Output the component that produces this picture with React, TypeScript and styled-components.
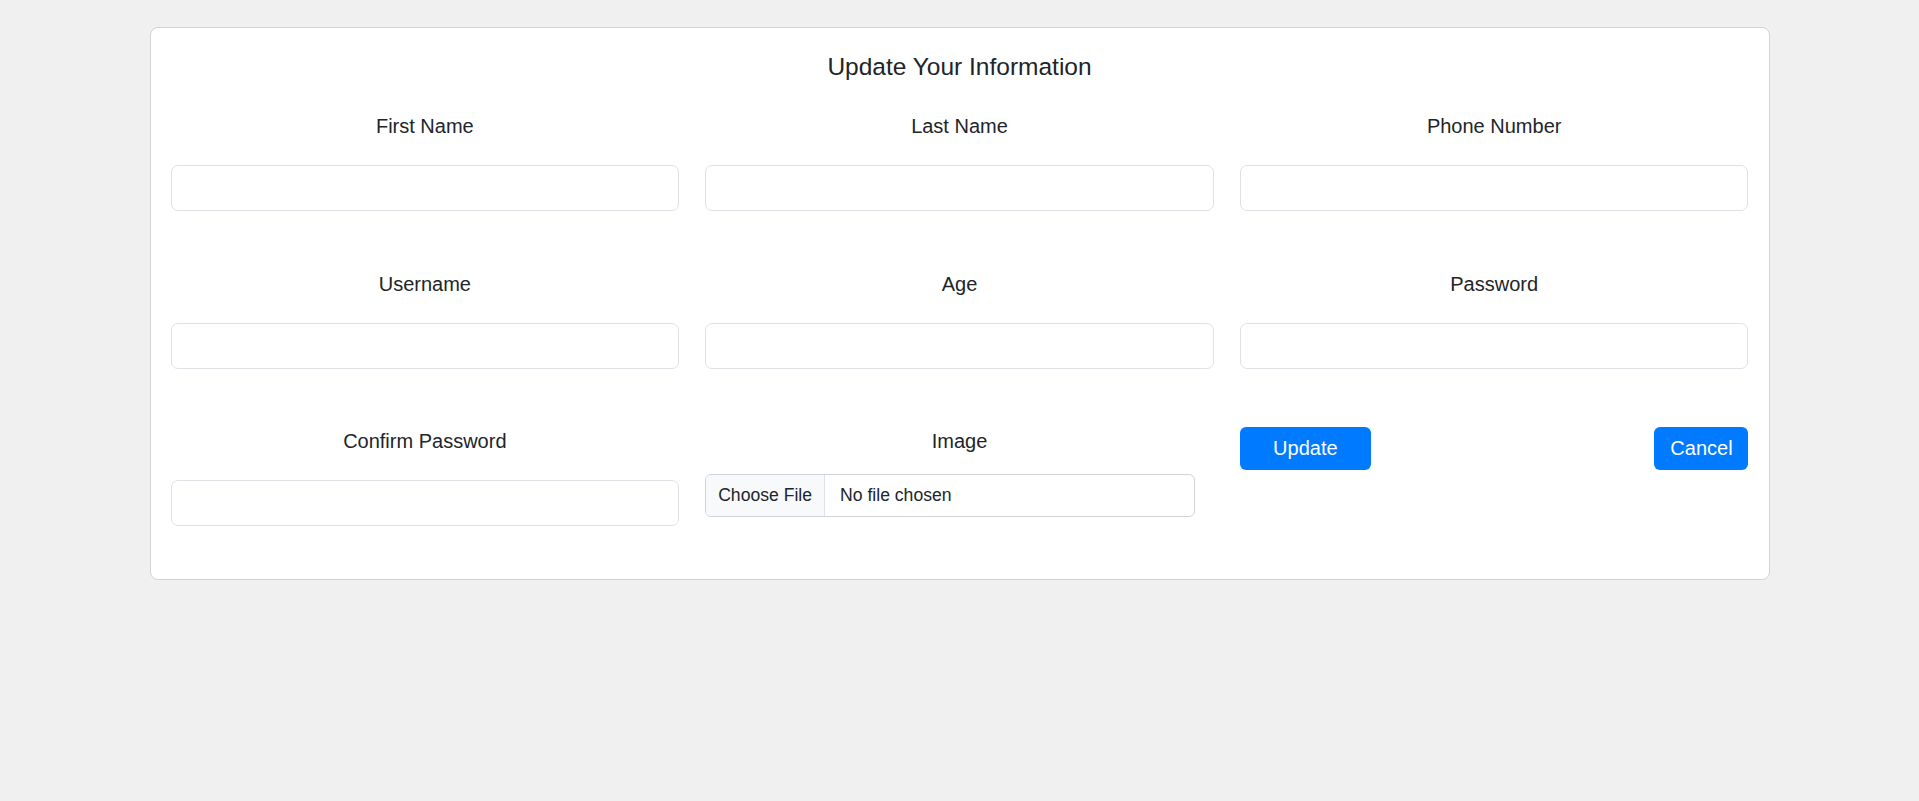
import styled, { createGlobalStyle } from "styled-components";

const GlobalStyle = createGlobalStyle`
  body {
    margin: 0;
    background: #f0f0f0;
    font-family: "Liberation Sans", Arial, sans-serif;
    color: #212529;
  }
`;

const Page = styled.div`
  padding-top: 27px;
  min-height: 774px;
`;

const Card = styled.form`
  box-sizing: border-box;
  width: 1620px;
  margin: 0 auto;
  padding: 24px 20px 52.5px;
  background: #fff;
  border: 1px solid #d3d3d3;
  border-radius: 8px;
`;

const Title = styled.h2`
  margin: 0 0 32px;
  font-size: 24.5px;
  font-weight: 400;
  line-height: 30px;
  text-align: center;
`;

const Grid = styled.div`
  display: grid;
  grid-template-columns: repeat(3, 1fr);
  column-gap: 26px;
  row-gap: 60.5px;
`;

const Field = styled.div<{ $gap?: number }>`
  display: flex;
  flex-direction: column;
  gap: ${({ $gap }) => $gap ?? 27}px;
`;

const Label = styled.label`
  display: block;
  font-size: 20px;
  line-height: 24px;
  text-align: center;
`;

const TextInput = styled.input`
  box-sizing: border-box;
  width: 100%;
  height: 46px;
  padding: 0 12px;
  font: 18px "Liberation Sans", Arial, sans-serif;
  border: 1px solid #dee2e6;
  border-radius: 7px;
  background: #fff;
  outline: none;
`;

const FileInput = styled.input`
  box-sizing: border-box;
  width: 490px;
  height: 43px;
  padding: 0 13px;
  font: 17.6px "Liberation Sans", Arial, sans-serif;
  line-height: 41px;
  color: #212529;
  border: 1px solid #ced4da;
  border-radius: 6px;
  background: #fff;
  overflow: hidden;

  &::file-selector-button {
    height: 41px;
    margin: 0 15px 0 -13px;
    padding: 0 12px;
    border: 0;
    border-right: 1px solid #dee2e6;
    border-radius: 0;
    background: #f8f9fa;
    color: #212529;
    font: inherit;
  }
`;

const Actions = styled.div`
  display: flex;
  justify-content: space-between;
  align-items: flex-start;
  margin-top: -2px;
`;

const Button = styled.button<{ $width: number }>`
  width: ${({ $width }) => $width}px;
  height: 43px;
  padding: 0;
  border: 0;
  border-radius: 6px;
  background: #007bff;
  color: #fff;
  font: 20px "Liberation Sans", Arial, sans-serif;
  cursor: pointer;
`;

const fields = [
  { id: "firstName", label: "First Name", type: "text" },
  { id: "lastName", label: "Last Name", type: "text" },
  { id: "phone", label: "Phone Number", type: "text" },
  { id: "username", label: "Username", type: "text" },
  { id: "age", label: "Age", type: "number" },
  { id: "password", label: "Password", type: "password" },
  { id: "confirmPassword", label: "Confirm Password", type: "password" },
];

export default function App() {
  return (
    <Page>
      <GlobalStyle />
      <Card onSubmit={(e) => e.preventDefault()}>
        <Title>Update Your Information</Title>
        <Grid>
          {fields.map((f) => (
            <Field key={f.id}>
              <Label htmlFor={f.id}>{f.label}</Label>
              <TextInput id={f.id} type={f.type} />
            </Field>
          ))}
          <Field $gap={21}>
            <Label htmlFor="image">Image</Label>
            <FileInput id="image" type="file" />
          </Field>
          <Actions>
            <Button type="submit" $width={131}>
              Update
            </Button>
            <Button type="button" $width={94}>
              Cancel
            </Button>
          </Actions>
        </Grid>
      </Card>
    </Page>
  );
}
